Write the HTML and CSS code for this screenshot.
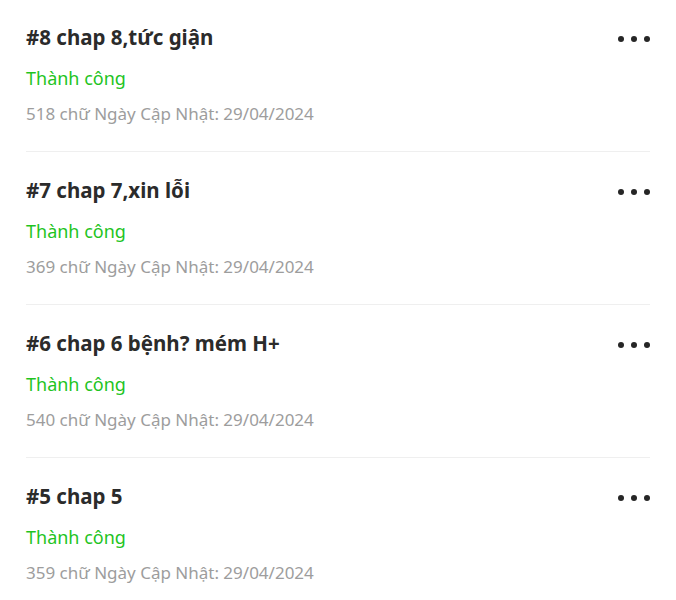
FILE: index.html
```html
<!DOCTYPE html>
<html lang="vi">
<head>
    <meta charset="utf-8" />
    <title>Chapters</title>
    <link rel="stylesheet" href="styles.css">
</head>
<body>
    <div class="chapter_list">
        <div class="chapter">
            <div class="chapter_main">
                <h3 class="chapter_title">#8 chap 8,tức giận</h3>
                <p class="status">Thành công</p>
                <p class="meta">518 chữ Ngày Cập Nhật: 29/04/2024</p>
            </div>
            <span class="more"><i></i><i></i><i></i></span>
        </div>
        <div class="chapter">
            <div class="chapter_main">
                <h3 class="chapter_title">#7 chap 7,xin lỗi</h3>
                <p class="status">Thành công</p>
                <p class="meta">369 chữ Ngày Cập Nhật: 29/04/2024</p>
            </div>
            <span class="more"><i></i><i></i><i></i></span>
        </div>
        <div class="chapter">
            <div class="chapter_main">
                <h3 class="chapter_title">#6 chap 6 bệnh? mém H+</h3>
                <p class="status">Thành công</p>
                <p class="meta">540 chữ Ngày Cập Nhật: 29/04/2024</p>
            </div>
            <span class="more"><i></i><i></i><i></i></span>
        </div>
        <div class="chapter">
            <div class="chapter_main">
                <h3 class="chapter_title">#5 chap 5</h3>
                <p class="status">Thành công</p>
                <p class="meta">359 chữ Ngày Cập Nhật: 29/04/2024</p>
            </div>
            <span class="more"><i></i><i></i><i></i></span>
        </div>
    </div>
</body>
</html>
```
FILE: styles.css
```css
* {
    margin: 0px;
    padding: 0px;
    box-sizing: border-box;
}

body {
    font-family: 'Noto Sans', 'Open Sans', sans-serif;
    background: #fff;
}

.chapter_list {
    padding: 0 26px;
}

.chapter {
    display: flex;
    align-items: flex-start;
    padding: 24px 0 26px 0;
    border-bottom: 1px solid #efefef;
}

    .chapter:first-child {
        padding-top: 23px;
    }

    .chapter_main {
        flex: 1;
    }

    .chapter_title {
        font-size: 20.5px;
        line-height: 28px;
        font-weight: 700;
        color: #2b2b2b;
    }

    .status {
        margin-top: 15px;
        font-size: 18px;
        line-height: 24px;
        color: #1fc41f;
    }

    .meta {
        margin-top: 13px;
        font-size: 17px;
        line-height: 22px;
        color: #9d9d9d;
    }

.more {
    display: flex;
    gap: 7px;
    margin-top: 13px;
}

    .more i {
        width: 6px;
        height: 6px;
        border-radius: 50%;
        background: #262626;
    }
```
